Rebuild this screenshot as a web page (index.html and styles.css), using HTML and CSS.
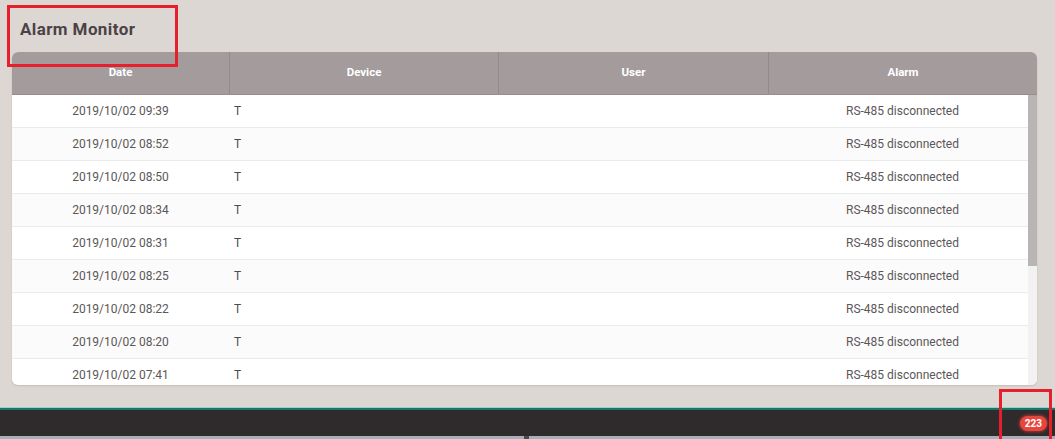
FILE: index.html
```html
<!DOCTYPE html>
<html lang="en">
<head>
    <meta charset="UTF-8">
    <meta name="viewport" content="width=device-width, initial-scale=1.0">
    <title>Alarm Monitor</title>
    <link rel="stylesheet" href="styles.css">
</head>
<body>
    <div class="page">
        <main class="content">
            <h1 class="page-title">Alarm Monitor</h1>

            <div class="alarm-card">
                <div class="alarm-head">
                    <div class="cell">Date</div>
                    <div class="cell">Device</div>
                    <div class="cell">User</div>
                    <div class="cell">Alarm</div>
                </div>
                <div class="alarm-body">
                    <div class="alarm-row"><div class="cell">2019/10/02 09:39</div><div class="cell device">T</div><div class="cell"></div><div class="cell">RS-485 disconnected</div></div>
                    <div class="alarm-row"><div class="cell">2019/10/02 08:52</div><div class="cell device">T</div><div class="cell"></div><div class="cell">RS-485 disconnected</div></div>
                    <div class="alarm-row"><div class="cell">2019/10/02 08:50</div><div class="cell device">T</div><div class="cell"></div><div class="cell">RS-485 disconnected</div></div>
                    <div class="alarm-row"><div class="cell">2019/10/02 08:34</div><div class="cell device">T</div><div class="cell"></div><div class="cell">RS-485 disconnected</div></div>
                    <div class="alarm-row"><div class="cell">2019/10/02 08:31</div><div class="cell device">T</div><div class="cell"></div><div class="cell">RS-485 disconnected</div></div>
                    <div class="alarm-row"><div class="cell">2019/10/02 08:25</div><div class="cell device">T</div><div class="cell"></div><div class="cell">RS-485 disconnected</div></div>
                    <div class="alarm-row"><div class="cell">2019/10/02 08:22</div><div class="cell device">T</div><div class="cell"></div><div class="cell">RS-485 disconnected</div></div>
                    <div class="alarm-row"><div class="cell">2019/10/02 08:20</div><div class="cell device">T</div><div class="cell"></div><div class="cell">RS-485 disconnected</div></div>
                    <div class="alarm-row last"><div class="cell">2019/10/02 07:41</div><div class="cell device">T</div><div class="cell"></div><div class="cell">RS-485 disconnected</div></div>

                    <div class="scroll-track"><div class="scroll-thumb"></div></div>
                </div>
            </div>
        </main>

        <footer class="status-bar">
            <span class="alarm-badge">223</span>
        </footer>
        <div class="taskbar-edge"><span class="edge-mark"></span></div>

        <div class="mark mark-title"></div>
        <div class="mark mark-badge"></div>
    </div>
</body>
</html>
```

FILE: styles.css
```css
:root {
    --page-bg: #dcd7d3;
    --head-bg: #a49b9d;
    --head-line: #938a8c;
    --text-color: #5b5757;
    --title-color: #4c4246;
    --row-line: #ebebeb;
    --mark-red: #e51f2b;
}

* {
    box-sizing: border-box;
}

body {
    margin: 0;
    padding: 0;
    font-family: Roboto, "Liberation Sans", Arial, sans-serif;
    background-color: var(--page-bg);
    color: var(--text-color);
    overflow: hidden;
}

.page {
    position: relative;
    width: 1055px;
    height: 439px;
    display: flex;
    flex-direction: column;
}

.content {
    flex: 1;
    padding: 0 18px 0 12px;
}

.page-title {
    margin: 0;
    height: 52px;
    padding: 19px 0 0 8px;
    font-size: 17px;
    font-weight: bold;
    color: var(--title-color);
    letter-spacing: 0.4px;
}

.alarm-card {
    height: 333px;
    background-color: white;
    border-radius: 6px;
    overflow: hidden;
    box-shadow: 0 1px 2px rgba(0, 0, 0, 0.12);
    display: flex;
    flex-direction: column;
}

.alarm-head,
.alarm-row {
    display: grid;
    grid-template-columns: 217px 269px 270px 1fr;
    align-items: center;
}

.alarm-head {
    height: 43px;
    background-color: var(--head-bg);
    border-bottom: 1px solid #958d8f;
    color: white;
    font-size: 11.5px;
    font-weight: bold;
}

.alarm-head .cell {
    height: 100%;
    display: flex;
    align-items: center;
    justify-content: center;
    padding-bottom: 2px;
    border-left: 1px solid var(--head-line);
}

.alarm-head .cell:first-child {
    border-left: none;
}

.alarm-body {
    flex: 1;
    position: relative;
    overflow: hidden;
}

.alarm-row {
    height: 33px;
    border-bottom: 1px solid var(--row-line);
    font-size: 12px;
    color: var(--text-color);
}

.alarm-row:nth-child(even) {
    background-color: #fbfbfb;
}

.alarm-row.last {
    border-bottom: none;
}

.alarm-row .cell {
    text-align: center;
    padding-bottom: 1px;
}

.alarm-row .cell.device {
    text-align: left;
    padding-left: 5px;
    color: #4f4b4b;
}

/* scrollbar sits over the right edge of the rows */
.scroll-track {
    position: absolute;
    top: 0;
    right: 0;
    bottom: 0;
    width: 9px;
    background-color: #f2f2f2;
}

.scroll-thumb {
    height: 171px;
    background-color: #b9b5b5;
}

.status-bar {
    height: 30px;
    margin-top: 22px;
    background-color: #2f2a2b;
    border-top: 1px solid #9ccfc6;
    box-shadow: inset 0 2px 0 #16786b;
    display: flex;
    align-items: center;
    justify-content: flex-end;
    padding: 2px 8px 0 0;
}

.alarm-badge {
    background-color: #e8453d;
    color: white;
    font-size: 10px;
    font-weight: bold;
    padding: 2px 5px;
    border-radius: 8px;
    box-shadow: 0 0 3px 1px rgba(232, 69, 61, 0.6);
}

.taskbar-edge {
    height: 3px;
    background-color: #a6b0bb;
    position: relative;
}

.edge-mark {
    position: absolute;
    left: 524px;
    top: 0;
    width: 5px;
    height: 3px;
    background-color: #4d4a4a;
}

/* red highlight boxes drawn over the screenshot */
.mark {
    position: absolute;
    border: 3px solid var(--mark-red);
}

.mark-title {
    left: 7px;
    top: 5px;
    width: 171px;
    height: 62px;
}

.mark-badge {
    left: 999px;
    top: 389px;
    width: 53px;
    height: 54px;
}
```
